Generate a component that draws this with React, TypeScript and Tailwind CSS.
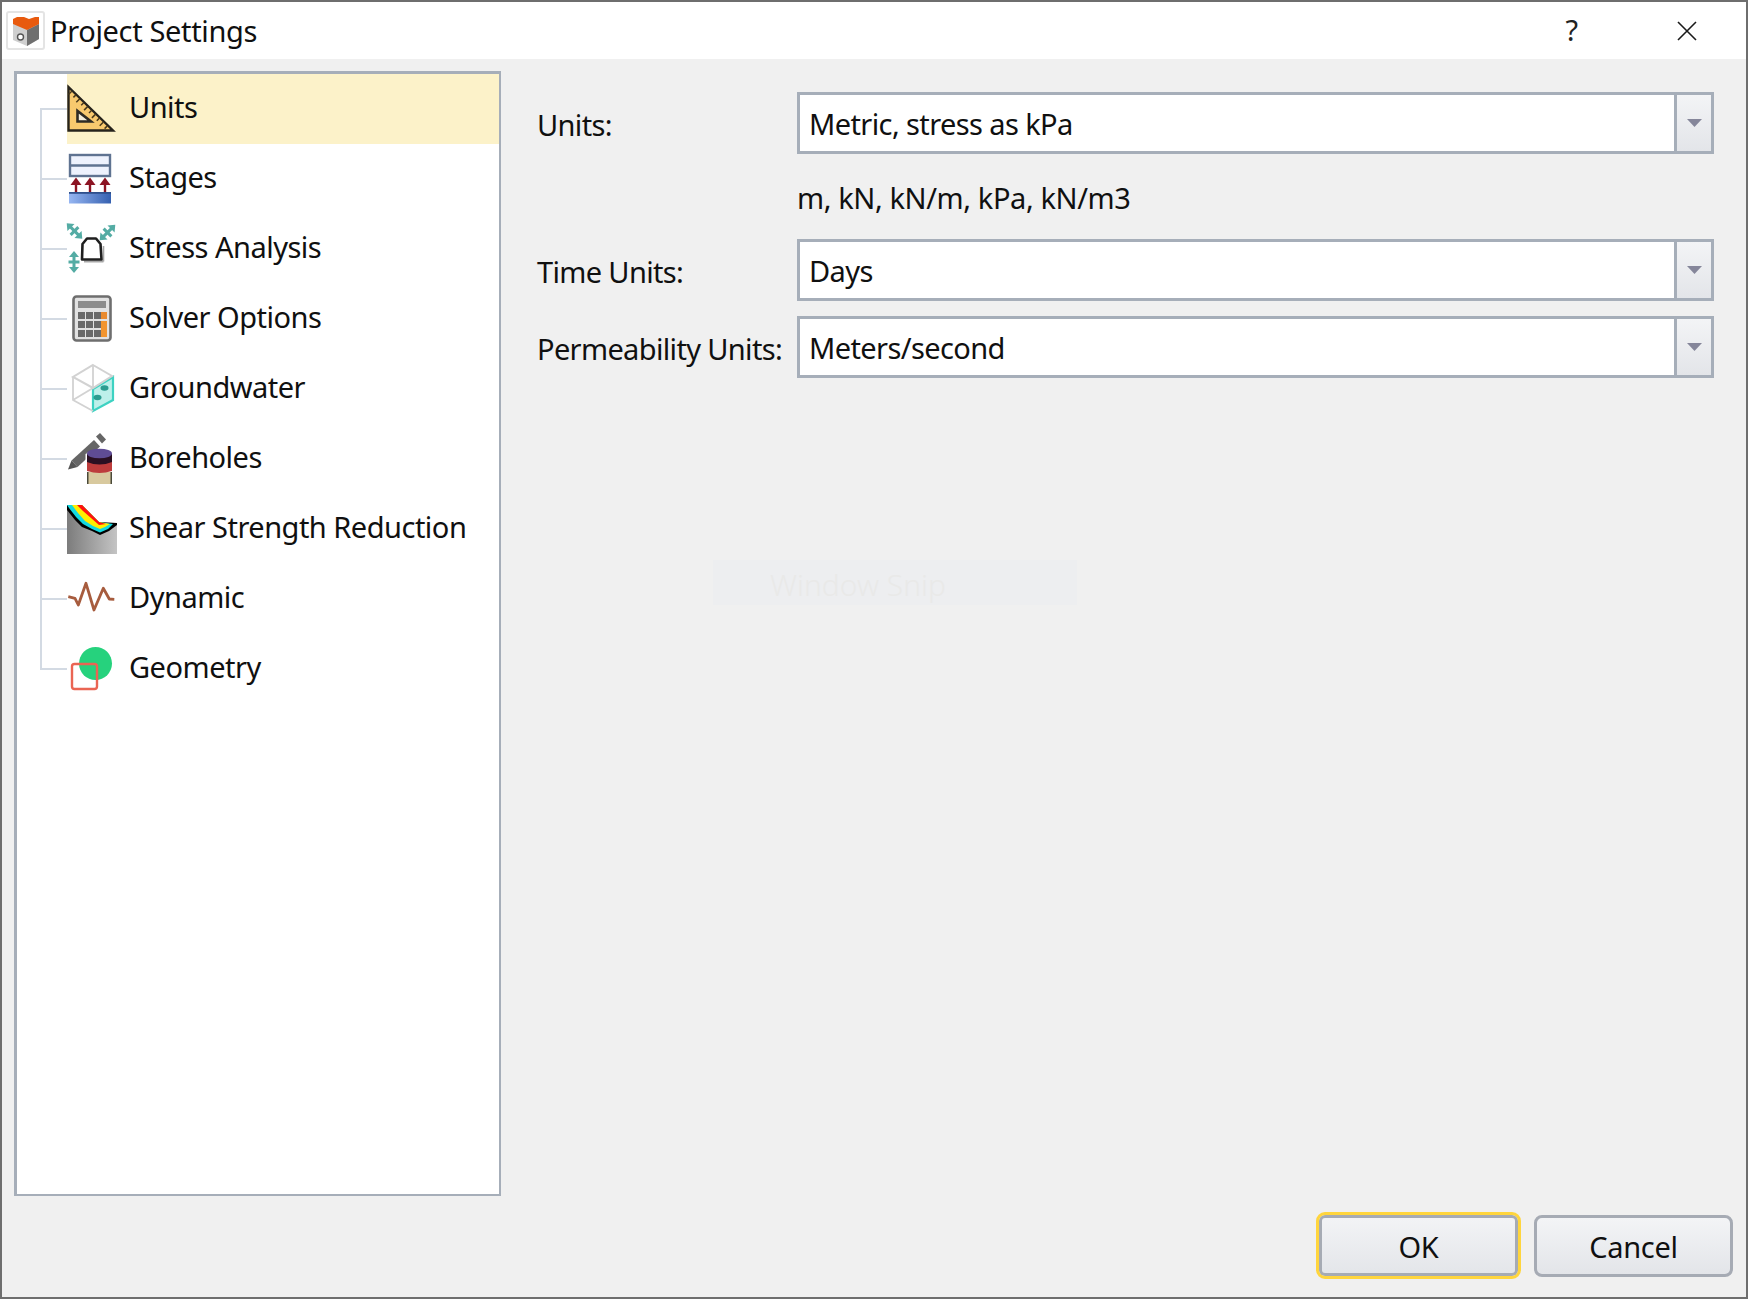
import React from "react";

const font = "font-['Noto_Sans','Open_Sans',sans-serif]";

function IconUnits() {
  const ticks = [];
  for (let i = 0; i < 10; i++) {
    const x = 5 + i * 3.9;
    const y = 17 + i * 3.9;
    ticks.push(<line key={i} x1={x} y1={y} x2={x - (i % 2 ? 2.5 : 3.5)} y2={y + (i % 2 ? 2.5 : 3.5)} stroke="#4a3a1c" strokeWidth="1.5" />);
  }
  return (
    <>
      <polygon points="1.5,13 1.5,56.5 46,56.5" fill="#f8c96e" stroke="#26231c" strokeWidth="2.4" strokeLinejoin="miter" />
      {ticks}
      <polygon points="10.5,37 10.5,47.5 24,47.5" fill="#f4eedc" stroke="#2e2b24" strokeWidth="2.6" />
    </>
  );
}

function IconStages() {
  return (
    <>
      <defs>
        <linearGradient id="stg" x1="0" y1="0" x2="1" y2="0">
          <stop offset="0" stopColor="#96b6f2" />
          <stop offset="1" stopColor="#3560b0" />
        </linearGradient>
      </defs>
      <rect x="3" y="11" width="40" height="21" fill="#eef2fd" stroke="#5f7391" strokeWidth="2.4" />
      <line x1="3" y1="21.5" x2="43" y2="21.5" stroke="#5f7391" strokeWidth="2.4" />
      {[9, 23, 38].map((x) => (
        <g key={x}>
          <line x1={x} y1="38" x2={x} y2="48" stroke="#8c1322" strokeWidth="2.4" />
          <polygon points={`${x},33.5 ${x + 5.5},41 ${x - 5.5},41`} fill="#8c1322" />
        </g>
      ))}
      <rect x="2" y="48" width="42" height="11.5" fill="url(#stg)" />
      <rect x="2" y="48" width="42" height="1.8" fill="#2e4f8c" />
    </>
  );
}

function Cross({ x, y, r }: { x: number; y: number; r: number }) {
  return (
    <g transform={`translate(${x} ${y}) rotate(${r})`} stroke="#54aca4" fill="#54aca4" strokeWidth="3">
      <line x1="-8" y1="0" x2="8" y2="0" />
      <line x1="0" y1="-5.5" x2="0" y2="5.5" />
      <polygon points="11,0 5,-5 5,5" stroke="none" />
      <polygon points="-11,0 -5,-5 -5,5" stroke="none" />
    </g>
  );
}

function IconStress() {
  return (
    <>
      <Cross x={7.5} y={17} r={45} />
      <Cross x={40.5} y={18.5} r={-45} />
      <Cross x={7} y={48} r={90} />
      <line x1="17" y1="47.5" x2="36.5" y2="47.5" stroke="#a8a8a8" strokeWidth="2" />
      <line x1="36.5" y1="32" x2="36.5" y2="47.5" stroke="#a8a8a8" strokeWidth="1.6" />
      <path d="M15.5 30 L20 24.5 L29 24.5 L33.5 30 L34.5 45.5 L15 45.5 Z" fill="#fff" stroke="#1f1f1f" strokeWidth="2.6" strokeLinejoin="round" />
    </>
  );
}

function IconSolver() {
  const cols = [11, 19, 27];
  const rows = [28, 37, 46];
  return (
    <>
      <rect x="6.5" y="12.5" width="37" height="44" rx="3" fill="#e2e2e2" stroke="#6e6e6e" strokeWidth="2.6" />
      <rect x="11" y="17" width="28" height="7" fill="#8c8c8c" />
      {rows.map((y) =>
        cols.map((x) => <rect key={`${x}-${y}`} x={x} y={y} width="7" height="7" fill="#6a6a6a" />)
      )}
      <rect x="34" y="28" width="6" height="7" fill="#e98a2e" />
      <rect x="34" y="37" width="6" height="16" fill="#f3952f" />
    </>
  );
}

function IconGroundwater() {
  return (
    <>
      <polygon points="26,35 46,23 46,46 26,57" fill="#bdf0ea" stroke="#3dd2c2" strokeWidth="2.2" />
      <path d="M26 11 L45 22 L26 34 L6 23 Z" fill="#fff" stroke="#d2d2d2" strokeWidth="2" />
      <path d="M6 23 L6 46 L26 57 M26 11 L26 34 M6 46 L26 34" fill="none" stroke="#d2d2d2" strokeWidth="1.8" />
      <ellipse cx="37.5" cy="34" rx="4" ry="2.8" fill="#2b9c90" />
      <ellipse cx="30.5" cy="43.5" rx="4" ry="2.8" fill="#2b9c90" />
    </>
  );
}

function IconBoreholes() {
  return (
    <>
      <polygon points="4.5,36.5 27,16 33,22.5 10.5,43" fill="#666666" />
      <polygon points="29,12.5 33,9 39,15.5 35,19.5" fill="#666666" />
      <polygon points="1,45.5 4.5,36.5 10.5,43" fill="#555555" />
      <path d="M18.5 33 L18.5 47 L46.5 47 L46.5 30 Q32.5 22.5 18.5 30 Z" fill="#ffffff" />
      <rect x="20" y="48" width="25" height="12" fill="#d8c99e" />
      <rect x="20" y="48" width="1.5" height="12" fill="#4a4a3a" />
      <rect x="43.5" y="48" width="1.5" height="12" fill="#4a4a3a" />
      <path d="M20 38 L20 47 Q32.5 51 45 47 L45 38 Z" fill="#bd3c3c" />
      <path d="M20 30 L20 38 Q32.5 43 45 38 L45 30 Z" fill="#2a1022" />
      <ellipse cx="32.5" cy="29.5" rx="12.5" ry="4.8" fill="#5f4c94" />
    </>
  );
}

function IconShear() {
  return (
    <>
      <defs>
        <linearGradient id="shr" x1="0" y1="0" x2="1" y2="0">
          <stop offset="0" stopColor="#7c7c7c" />
          <stop offset="1" stopColor="#c4c4c4" />
        </linearGradient>
      </defs>
      <rect x="0" y="11" width="50" height="49" fill="url(#shr)" />
      <polygon points="15,11 50,11 50,30 32,30" fill="#ffffff" />
      <polygon points="0,11 15,11 32,28 50,29 50,31 42,37 33,41 25,37 15,33 8,26 0,16" fill="#000000" />
      <polygon points="0,11 15,11 32,28 46,30 41,35 33,38.5 25,35 16,30 9,23 2,14" fill="#12d8e0" />
      <polygon points="5,11 15,11 32,28 43,30 38,33 33,35 26,32 18,27 11,19" fill="#ffee00" />
      <polygon points="10,11 15,11 32,28 39,30 32,31 24,24 16,17" fill="#ff1010" />
    </>
  );
}

function IconDynamic() {
  return (
    <polyline
      points="1.3,32.7 8,34.3 11.3,41 19,19.3 27,46 36.3,24.3 42.3,35 47.3,35.3"
      fill="none"
      stroke="#a75c3e"
      strokeWidth="2.8"
      strokeLinejoin="round"
    />
  );
}

function IconGeometry() {
  return (
    <>
      <circle cx="28.5" cy="29.5" r="16.5" fill="#26d27d" />
      <rect x="5" y="30" width="25" height="25" rx="2.5" fill="none" stroke="#ea6553" strokeWidth="2.4" />
    </>
  );
}

const items: { label: string; icon: React.ReactNode }[] = [
  { label: "Units", icon: <IconUnits /> },
  { label: "Stages", icon: <IconStages /> },
  { label: "Stress Analysis", icon: <IconStress /> },
  { label: "Solver Options", icon: <IconSolver /> },
  { label: "Groundwater", icon: <IconGroundwater /> },
  { label: "Boreholes", icon: <IconBoreholes /> },
  { label: "Shear Strength Reduction", icon: <IconShear /> },
  { label: "Dynamic", icon: <IconDynamic /> },
  { label: "Geometry", icon: <IconGeometry /> },
];

function TreeRow({ label, icon, index }: { label: string; icon: React.ReactNode; index: number }) {
  const first = index === 0;
  const last = index === items.length - 1;
  return (
    <div className="flex h-[70px]">
      <div className="ml-[23px] w-[27px] shrink-0 flex flex-col">
        <div className={`h-[36px] border-b-2 border-[#d3dae3] ${first ? "" : "border-l-2"}`} />
        <div className={`h-[34px] border-[#d3dae3] ${last ? "" : "border-l-2"}`} />
      </div>
      <div className={`flex flex-1 items-center ${first ? "bg-[#fcf2c9]" : ""}`}>
        <svg className="w-[52px] h-[70px] shrink-0 overflow-visible" viewBox="0 0 52 70">
          {icon}
        </svg>
        <span className="ml-[10px] text-[29px] leading-[40px] mb-[4px] tracking-[-0.5px] text-[#101010] whitespace-nowrap">
          {label}
        </span>
      </div>
    </div>
  );
}

function Combo({ value }: { value: string }) {
  return (
    <div className="flex h-[62px] flex-1 border-[3px] border-[#a6aeb9] bg-white">
      <div className="flex flex-1 items-center pl-[9px] pt-[2px] text-[29px] tracking-[-0.6px] text-[#101010]">{value}</div>
      <div className="flex w-[37px] items-center justify-center border-l-[3px] border-[#a6aeb9] bg-linear-to-b from-[#f3f4f6] to-[#e3e5e9]">
        <svg width="15" height="8" viewBox="0 0 15 8">
          <polygon points="0,0 15,0 7.5,8" fill="#85869a" />
        </svg>
      </div>
    </div>
  );
}

export default function App() {
  return (
    <div className={`relative flex h-[1299px] w-[1748px] flex-col border-2 border-[#6e6e6e] bg-[#f0f0f0] ${font}`}>
      {/* Title bar */}
      <div className="flex h-[57px] shrink-0 items-center bg-white">
        <div className="ml-[4px] flex h-[39px] w-[39px] items-center justify-center rounded-[3px] border-2 border-[#e4e4e4]">
          <svg width="28" height="30" viewBox="0 0 28 30">
            <polygon points="1,6 27,5 27,23 15,30 1,24" fill="#cfcfcf" />
            <polygon points="15,14 27,8 27,23 15,30" fill="#6f6f6f" />
            <path d="M1 3 L5 1 L12 1 L17 3 L23 1 L27 1 L27 8 L15 14 L1 8 Z" fill="#e85a0e" />
            <circle cx="8.5" cy="21" r="3" fill="#fff" stroke="#555" strokeWidth="1.4" />
          </svg>
        </div>
        <span className="ml-[5px] text-[29px] tracking-[-0.35px] text-[#101010]">Project Settings</span>
        <div className="flex-1" />
        <span className="mb-[3px] text-[29px] leading-none text-[#222]">?</span>
        <svg className="ml-[99px] mr-[49px]" width="20" height="20" viewBox="0 0 20 20">
          <path d="M1 1 L19 19 M19 1 L1 19" stroke="#1a1a1a" strokeWidth="1.6" fill="none" />
        </svg>
      </div>

      {/* Body */}
      <div className="flex pl-[12px] pt-[12px]">
        <div className="h-[1125px] w-[487px] shrink-0 border-t-[3px] border-l-[3px] border-r-2 border-b-2 border-[#a6aeb9] bg-white">
          {items.map((it, i) => (
            <TreeRow key={it.label} label={it.label} icon={it.icon} index={i} />
          ))}
        </div>

        <div className="flex flex-1 flex-col pl-[36px] pr-[32px] pt-[21px] text-[29px] tracking-[-0.65px] text-[#101010]">
          <div className="flex items-center">
            <span className="w-[260px] shrink-0 pt-[3px]">Units:</span>
            <Combo value="Metric, stress as kPa" />
          </div>
          <div className="flex h-[85px] items-center pl-[260px] pt-[2px] tracking-[-0.4px]">m, kN, kN/m, kPa, kN/m3</div>
          <div className="flex items-center">
            <span className="w-[260px] shrink-0 pt-[4px]">Time Units:</span>
            <Combo value="Days" />
          </div>
          <div className="mt-[15px] flex items-center">
            <span className="w-[260px] shrink-0 whitespace-nowrap pt-[4px]">Permeability Units:</span>
            <Combo value="Meters/second" />
          </div>
        </div>
      </div>

      {/* Footer */}
      <div className="mt-[16px] flex items-center justify-end gap-[13px] pr-[13px] text-[29px] tracking-[-0.3px] text-[#101010]">
        <button className="flex h-[67px] w-[205px] items-center justify-center rounded-[9px] border-[3px] border-[#ffd53d] bg-linear-to-b from-[#f3f4f6] to-[#e3e5e9] pt-[2px] shadow-[inset_0_0_0_3px_#a6abb4]">
          OK
        </button>
        <button className="flex h-[62px] w-[199px] items-center justify-center rounded-[8px] border-[3px] border-[#a6abb4] bg-linear-to-b from-[#f3f4f6] to-[#e3e5e9] pt-[2px]">
          Cancel
        </button>
      </div>

      {/* Faint snipping overlay */}
      <div className="absolute left-[711px] top-[558px] flex h-[45px] w-[364px] items-center bg-[#edeef0] pl-[57px] pt-[3px] text-[30px] font-light text-[#e9e9e8]">
        Window Snip
      </div>
    </div>
  );
}
